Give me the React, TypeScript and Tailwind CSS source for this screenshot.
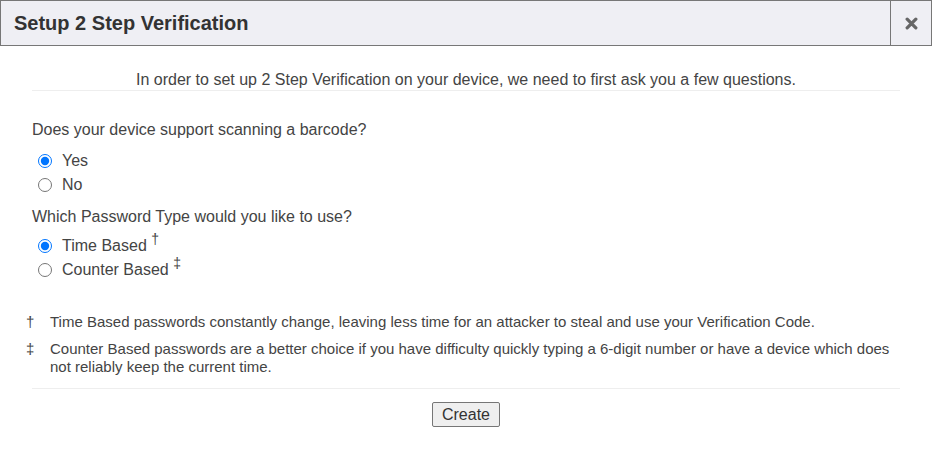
import { useState } from "react";

const App = () => {
  const [barcode, setBarcode] = useState("yes");
  const [pwType, setPwType] = useState("time");

  return (
    <div className="w-[932px] h-[462px] bg-white text-[#444] font-['Liberation_Sans',Arial,sans-serif]">
      {/* Header */}
      <div className="flex h-[46px] border border-[#777] bg-[#efeff4]">
        <h2 className="flex-1 pl-[13px] flex items-center text-[20px] font-bold text-[#333]">
          Setup 2 Step Verification
        </h2>
        <button className="w-[41px] border-l border-[#777] flex items-center justify-center">
          <svg width="13" height="13" viewBox="0 0 12 12">
            <path
              d="M2 2 L10 10 M10 2 L2 10"
              stroke="#666"
              strokeWidth="3"
              strokeLinecap="round"
            />
          </svg>
        </button>
      </div>

      <div className="px-[32px] pt-[25px]">
        <p className="text-center text-[16px] leading-[18px] pb-[1px] border-b border-[#eee]">
          In order to set up 2 Step Verification on your device, we need to first ask you a few questions.
        </p>

        {/* Questions */}
        <div className="pt-[30px] text-[16px] leading-[18px]">
          <p>Does your device support scanning a barcode?</p>
          <div className="flex flex-col pl-[6px] pt-[10px]">
            <label className="flex items-center gap-[10px] h-[24px]">
              <input
                type="radio"
                name="barcode"
                checked={barcode === "yes"}
                onChange={() => setBarcode("yes")}
                className="w-[14px] h-[14px] m-0 accent-[#0075ff]"
              />
              Yes
            </label>
            <label className="flex items-center gap-[10px] h-[24px]">
              <input
                type="radio"
                name="barcode"
                checked={barcode === "no"}
                onChange={() => setBarcode("no")}
                className="w-[14px] h-[14px] m-0 accent-[#0075ff]"
              />
              No
            </label>
          </div>

          <p className="pt-[11px]">Which Password Type would you like to use?</p>
          <div className="flex flex-col pl-[6px] pt-[8px]">
            <label className="flex items-center gap-[10px] h-[24px]">
              <input
                type="radio"
                name="pwtype"
                checked={pwType === "time"}
                onChange={() => setPwType("time")}
                className="w-[14px] h-[14px] m-0 accent-[#0075ff]"
              />
              <span>
                Time Based <sup className="text-[14px]">†</sup>
              </span>
            </label>
            <label className="flex items-center gap-[10px] h-[24px]">
              <input
                type="radio"
                name="pwtype"
                checked={pwType === "counter"}
                onChange={() => setPwType("counter")}
                className="w-[14px] h-[14px] m-0 accent-[#0075ff]"
              />
              <span>
                Counter Based <sup className="text-[14px]">‡</sup>
              </span>
            </label>
          </div>
        </div>
      </div>

      {/* Footnotes */}
      <div className="pl-[22px] pr-[30px] pt-[31px] text-[15px] leading-[18px] flex flex-col gap-[9px]">
        <div className="flex">
          <span className="w-[28px] shrink-0 pl-[4px]">†</span>
          <span>
            Time Based passwords constantly change, leaving less time for an attacker to steal and use your Verification Code.
          </span>
        </div>
        <div className="flex">
          <span className="w-[28px] shrink-0 pl-[4px]">‡</span>
          <span>
            Counter Based passwords are a better choice if you have difficulty quickly typing a 6-digit number or have a device which does not reliably keep the current time.
          </span>
        </div>
      </div>

      <div className="px-[32px] pt-[12px]">
        <div className="border-t border-[#eee] flex justify-center pt-[13px]">
          <button className="px-[9px] h-[25px] text-[16px] leading-none border border-[#767676] rounded-[2px] bg-[#efefef] text-[#333]">
            Create
          </button>
        </div>
      </div>
    </div>
  );
};

export default App;
